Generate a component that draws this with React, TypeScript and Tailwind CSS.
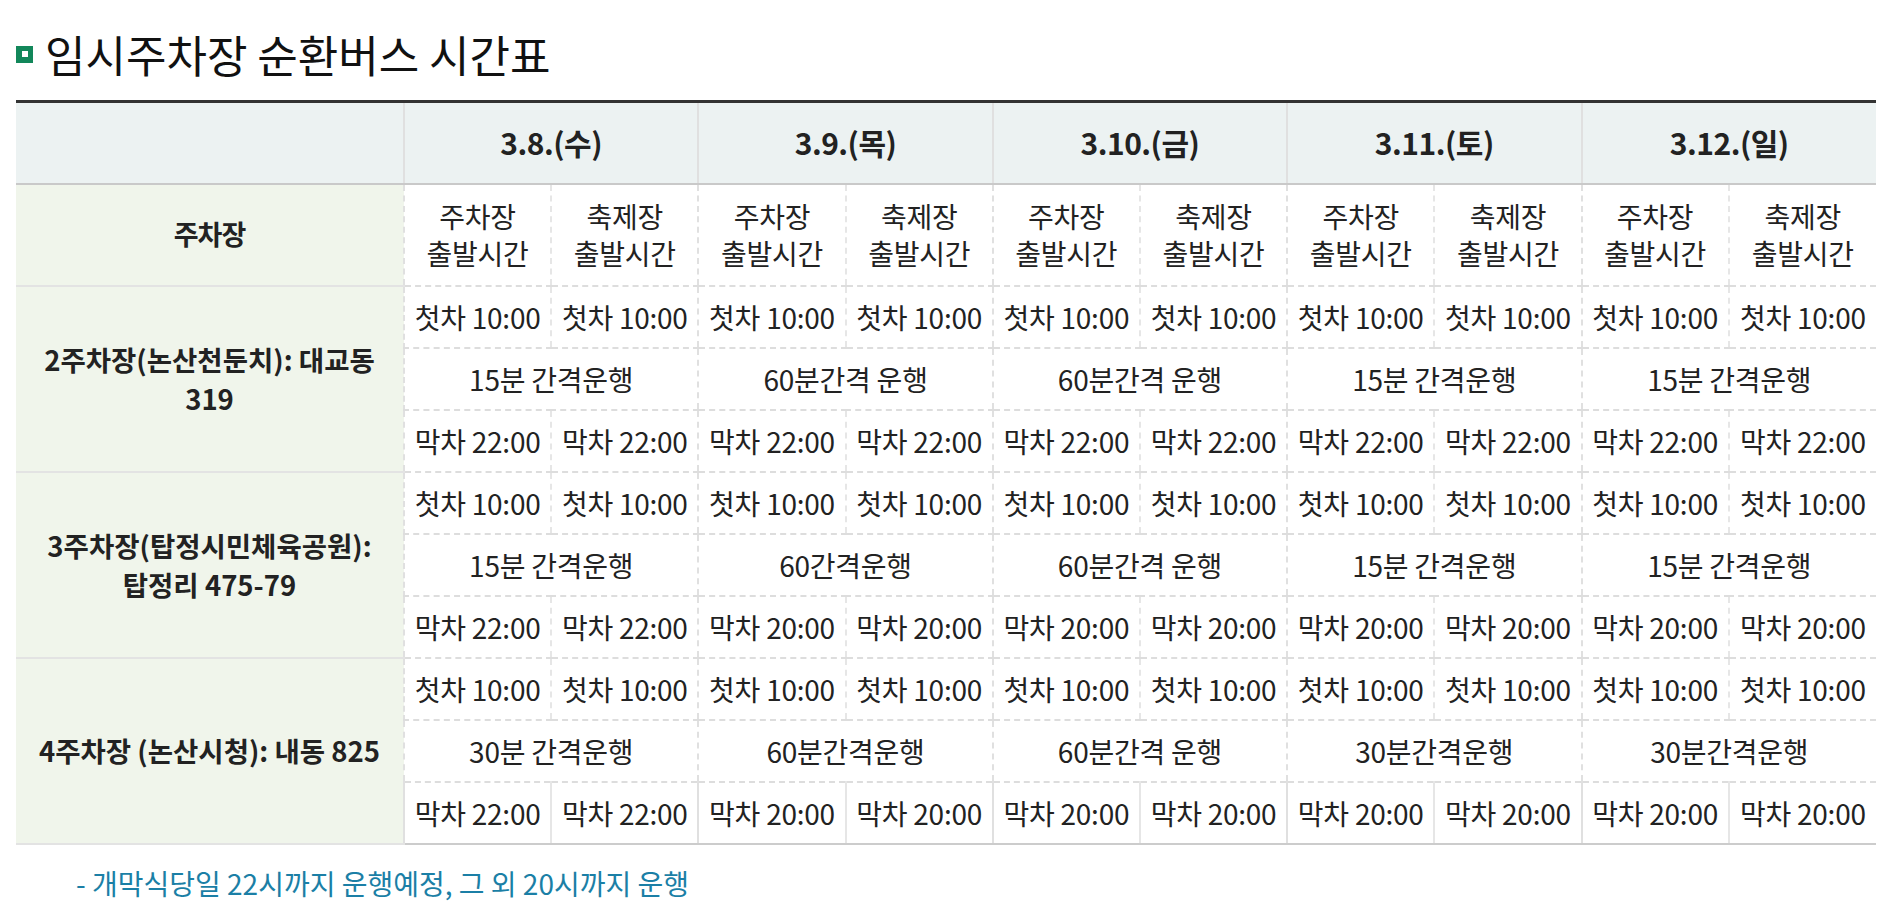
import React from "react";

type Group = {
  label: React.ReactNode;
  first: string;
  intervals: string[];
  last: string[];
};

const dates = ["3.8.(수)", "3.9.(목)", "3.10.(금)", "3.11.(토)", "3.12.(일)"];

const groups: Group[] = [
  {
    label: (
      <>
        2주차장(논산천둔치): 대교동
        <br />
        319
      </>
    ),
    first: "첫차 10:00",
    intervals: ["15분 간격운행", "60분간격 운행", "60분간격 운행", "15분 간격운행", "15분 간격운행"],
    last: ["막차 22:00", "막차 22:00", "막차 22:00", "막차 22:00", "막차 22:00"],
  },
  {
    label: (
      <>
        3주차장(탑정시민체육공원):
        <br />
        탑정리 475-79
      </>
    ),
    first: "첫차 10:00",
    intervals: ["15분 간격운행", "60간격운행", "60분간격 운행", "15분 간격운행", "15분 간격운행"],
    last: ["막차 22:00", "막차 20:00", "막차 20:00", "막차 20:00", "막차 20:00"],
  },
  {
    label: <>4주차장 (논산시청): 내동 825</>,
    first: "첫차 10:00",
    intervals: ["30분 간격운행", "60분간격운행", "60분간격 운행", "30분간격운행", "30분간격운행"],
    last: ["막차 22:00", "막차 20:00", "막차 20:00", "막차 20:00", "막차 20:00"],
  },
];

const font = { fontFamily: '"Noto Sans CJK KR", "Noto Sans", sans-serif' };

const cellText = "text-center text-[28px] tracking-[-0.25px] whitespace-nowrap font-normal text-[#222]";

export default function App() {
  return (
    <div className="bg-white min-h-[910px] px-[16px] pt-[30px] text-[#222]" style={font}>
      <h2 className="flex items-center h-[48px] mb-[22px]">
        <span className="w-[17px] h-[17px] bg-[#12875a] flex items-center justify-center mr-[12px]">
          <span className="w-[6px] h-[6px] bg-white" />
        </span>
        <span className="text-[44px] font-normal text-[#111] leading-none">
          임시주차장 순환버스 시간표
        </span>
      </h2>

      <table className="w-[1860px] table-fixed border-collapse border-t-[3px] border-t-[#333]">
        <colgroup>
          <col className="w-[388px]" />
          {Array.from({ length: 10 }).map((_, i) => (
            <col key={i} />
          ))}
        </colgroup>
        <thead>
          <tr className="h-[82px]">
            <th className="bg-[#ecf2f2] border-b-2 border-b-[#c9c9c9]" />
            {dates.map((d) => (
              <th
                key={d}
                colSpan={2}
                className="bg-[#ecf2f2] border-b-2 border-b-[#c9c9c9] border-l-2 border-l-[#e0e0e0] text-[30px] font-bold text-[#222] tracking-[-0.5px]"
              >
                {d}
              </th>
            ))}
          </tr>
        </thead>
        <tbody>
          <tr className="h-[102px]">
            <th className="bg-[#f0f5eb] border-b-2 border-b-[#e3e3e3] text-[27px] font-bold tracking-[-1px] text-[#222]">
              주차장
            </th>
            {dates.map((d) => (
              <React.Fragment key={d}>
                <td className={`border-l-2 border-l-[#e0e0e0] border-b-2 border-dashed border-b-[#dddddd] leading-[37px] ${cellText}`}>
                  주차장
                  <br />
                  출발시간
                </td>
                <td className={`border-l-2 border-l-[#e6e6e6] border-b-2 border-dashed border-b-[#dddddd] leading-[37px] ${cellText}`}>
                  축제장
                  <br />
                  출발시간
                </td>
              </React.Fragment>
            ))}
          </tr>
          {groups.map((g, gi) => {
            const isLast = gi === groups.length - 1;
            const lastRowBorder = isLast
              ? "border-b-2 border-solid border-b-[#cccccc]"
              : "border-b-2 border-dashed border-b-[#dddddd]";
            return (
              <React.Fragment key={gi}>
                <tr className="h-[62px]">
                  <th
                    rowSpan={3}
                    className="bg-[#f0f5eb] border-b-2 border-b-[#e3e3e3] text-[27.5px] leading-[39px] font-bold tracking-[0px] text-[#222]"
                  >
                    {g.label}
                  </th>
                  {dates.map((d) => (
                    <React.Fragment key={d}>
                      <td className={`border-l-2 border-l-[#e0e0e0] border-b-2 border-dashed border-b-[#dddddd] ${cellText}`}>
                        {g.first}
                      </td>
                      <td className={`border-l-2 border-l-[#e6e6e6] border-b-2 border-dashed border-b-[#dddddd] ${cellText}`}>
                        {g.first}
                      </td>
                    </React.Fragment>
                  ))}
                </tr>
                <tr className="h-[62px]">
                  {g.intervals.map((t, i) => (
                    <td
                      key={i}
                      colSpan={2}
                      className={`border-l-2 border-l-[#e0e0e0] border-b-2 border-dashed border-b-[#dddddd] ${cellText}`}
                    >
                      {t}
                    </td>
                  ))}
                </tr>
                <tr className="h-[62px]">
                  {g.last.map((t, i) => (
                    <React.Fragment key={i}>
                      <td className={`border-l-2 border-l-[#e0e0e0] ${lastRowBorder} ${cellText}`}>
                        {t}
                      </td>
                      <td className={`border-l-2 border-l-[#e6e6e6] ${lastRowBorder} ${cellText}`}>
                        {t}
                      </td>
                    </React.Fragment>
                  ))}
                </tr>
              </React.Fragment>
            );
          })}
        </tbody>
      </table>

      <p className="mt-[20px] pl-[60px] text-[28px] text-[#1b7fa6] leading-[36px]">
        - 개막식당일 22시까지 운행예정, 그 외 20시까지 운행
      </p>
    </div>
  );
}
